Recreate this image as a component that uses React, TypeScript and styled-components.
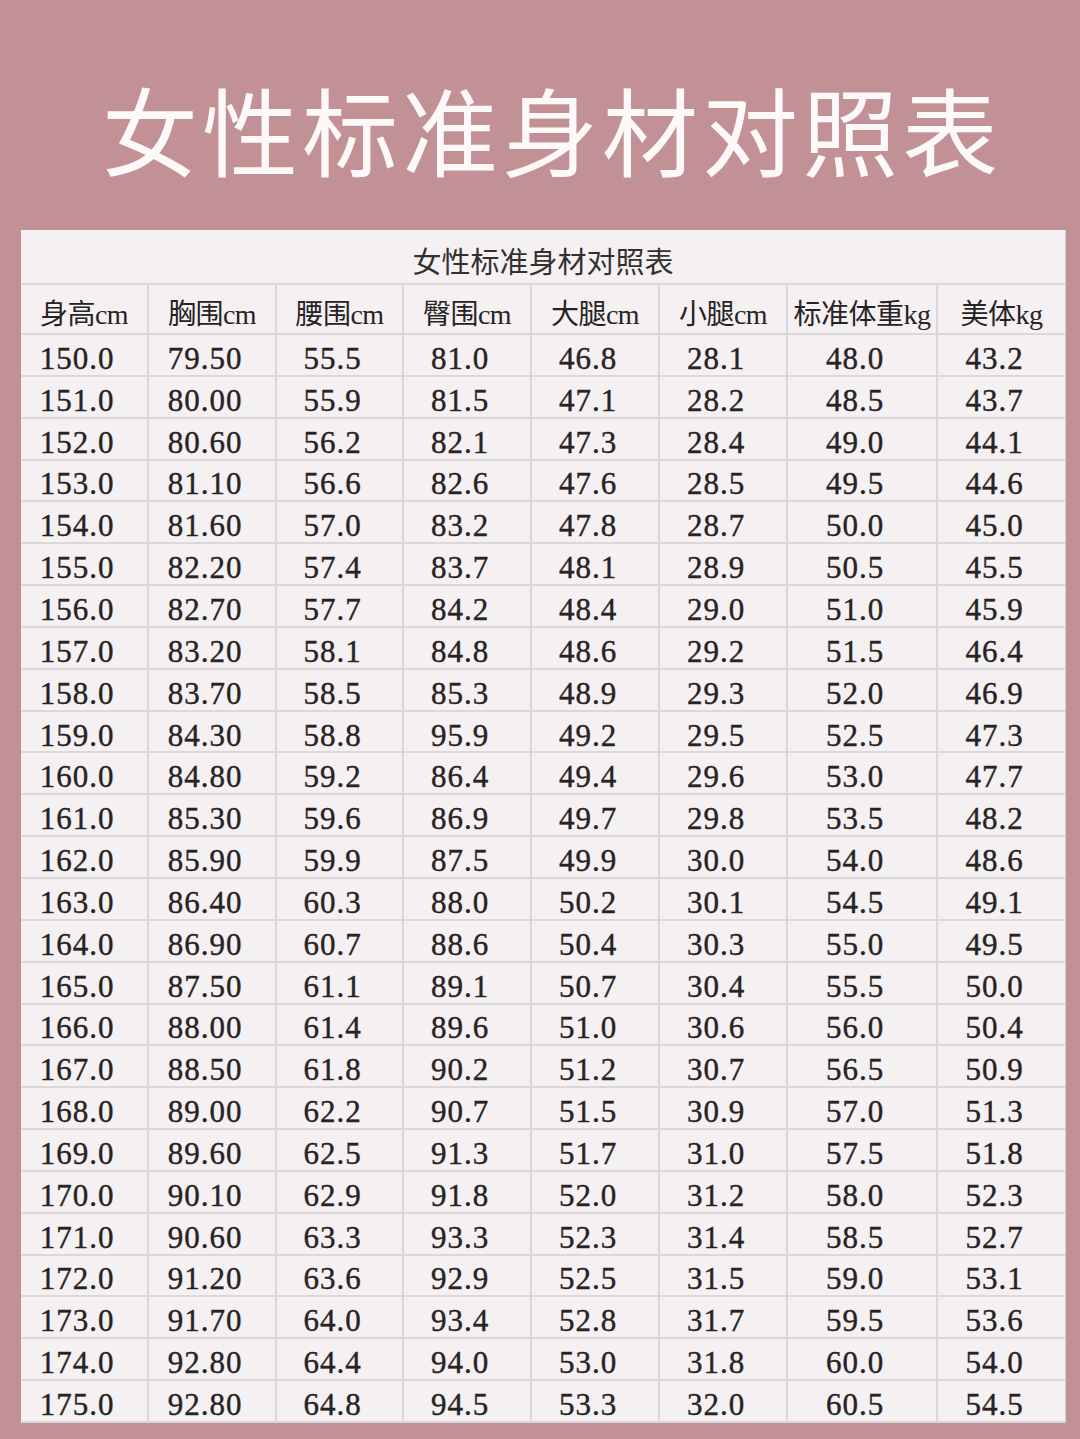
import React from "react";
import styled, { createGlobalStyle } from "styled-components";

const Global = createGlobalStyle`
  html, body { margin: 0; padding: 0; background: #c19195; }
  body { overflow: hidden; }
  * { box-sizing: border-box; }
`;

const Page = styled.div`
  width: 1080px;
  height: 1439px;
  background: #c19195;
  display: flex;
  flex-direction: column;
  align-items: flex-start;
`;

const BigTitle = styled.h1`
  margin: 0;
  width: 100%;
  padding: 80px 0 0 24px;
  height: 230px;
  text-align: center;
  font-family: "Noto Sans CJK SC", sans-serif;
  font-weight: 400;
  font-size: 96px;
  line-height: 96px;
  letter-spacing: 4px;
  color: #fdf9f9;
`;

const Table = styled.div`
  margin-left: 21px;
  display: grid;
  grid-template-columns: 128px 128px 127px 128px 128px 128px 150px 127px;
  grid-template-rows: 55px 50px repeat(26, 41.85px);
  background: #f5f0f1;
  border-right: 1px solid #d5cfd0;
`;

const Cell = styled.div<{ $last?: boolean }>`
  border-right: ${(p) => (p.$last ? "0" : "2px solid #dcd7d8")};
  border-bottom: 2px solid #dcd7d8;
  display: flex;
  align-items: center;
  justify-content: center;
  color: #262324;
  white-space: nowrap;
  overflow: hidden;
`;

const TitleCell = styled(Cell)`
  grid-column: 1 / -1;
  border-right: 0;
  padding-top: 6px;
  font-family: "Liberation Serif", "Noto Sans CJK SC", serif;
  font-size: 29px;
  color: #333031;
`;

const HeadCell = styled(Cell)`
  padding-top: 5px;
  font-family: "Liberation Serif", "Noto Sans CJK SC", serif;
  font-size: 28px;
  letter-spacing: -0.5px;
`;

const NumCell = styled(Cell)`
  padding: 8px 14px 0 0;
  font-family: "Liberation Serif", serif;
  font-size: 31px;
  letter-spacing: 1px;
  -webkit-text-stroke: 0.4px #262324;
`;

const headers = ["身高cm", "胸围cm", "腰围cm", "臀围cm", "大腿cm", "小腿cm", "标准体重kg", "美体kg"];

const raw = `150.0 79.50 55.5 81.0 46.8 28.1 48.0 43.2
151.0 80.00 55.9 81.5 47.1 28.2 48.5 43.7
152.0 80.60 56.2 82.1 47.3 28.4 49.0 44.1
153.0 81.10 56.6 82.6 47.6 28.5 49.5 44.6
154.0 81.60 57.0 83.2 47.8 28.7 50.0 45.0
155.0 82.20 57.4 83.7 48.1 28.9 50.5 45.5
156.0 82.70 57.7 84.2 48.4 29.0 51.0 45.9
157.0 83.20 58.1 84.8 48.6 29.2 51.5 46.4
158.0 83.70 58.5 85.3 48.9 29.3 52.0 46.9
159.0 84.30 58.8 95.9 49.2 29.5 52.5 47.3
160.0 84.80 59.2 86.4 49.4 29.6 53.0 47.7
161.0 85.30 59.6 86.9 49.7 29.8 53.5 48.2
162.0 85.90 59.9 87.5 49.9 30.0 54.0 48.6
163.0 86.40 60.3 88.0 50.2 30.1 54.5 49.1
164.0 86.90 60.7 88.6 50.4 30.3 55.0 49.5
165.0 87.50 61.1 89.1 50.7 30.4 55.5 50.0
166.0 88.00 61.4 89.6 51.0 30.6 56.0 50.4
167.0 88.50 61.8 90.2 51.2 30.7 56.5 50.9
168.0 89.00 62.2 90.7 51.5 30.9 57.0 51.3
169.0 89.60 62.5 91.3 51.7 31.0 57.5 51.8
170.0 90.10 62.9 91.8 52.0 31.2 58.0 52.3
171.0 90.60 63.3 93.3 52.3 31.4 58.5 52.7
172.0 91.20 63.6 92.9 52.5 31.5 59.0 53.1
173.0 91.70 64.0 93.4 52.8 31.7 59.5 53.6
174.0 92.80 64.4 94.0 53.0 31.8 60.0 54.0
175.0 92.80 64.8 94.5 53.3 32.0 60.5 54.5`;

const rows = raw.split("\n").map((r) => r.trim().split(" "));

export default function App() {
  return (
    <>
      <Global />
      <Page>
        <BigTitle>女性标准身材对照表</BigTitle>
        <Table>
          <TitleCell>女性标准身材对照表</TitleCell>
          {headers.map((h, i) => (
            <HeadCell key={h} $last={i === headers.length - 1}>
              {h}
            </HeadCell>
          ))}
          {rows.map((r, ri) =>
            r.map((v, ci) => (
              <NumCell key={`${ri}-${ci}`} $last={ci === r.length - 1}>
                {v}
              </NumCell>
            ))
          )}
        </Table>
      </Page>
    </>
  );
}
